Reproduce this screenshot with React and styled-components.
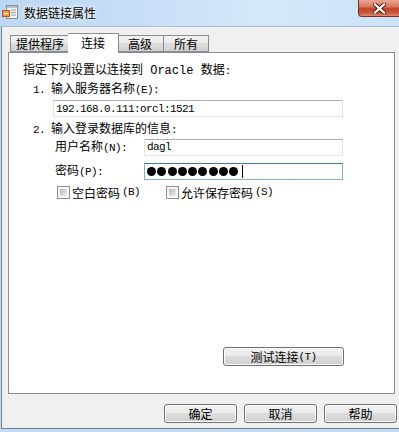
import React from 'react'
import styled, { createGlobalStyle } from 'styled-components'

const GlobalStyle = createGlobalStyle`
  html, body {
    margin: 0;
    padding: 0;
    background: #fff;
  }
  body {
    font-family: "Noto Sans CJK SC", "Liberation Sans", sans-serif;
    font-size: 12px;
    color: #000;
  }
`

const Window = styled.div`
  width: 399px;
  height: 432px;
  display: flex;
  flex-direction: column;
  background: #c6dcf2;
  overflow: hidden;
`

const TitleBar = styled.div`
  height: 26px;
  flex: none;
  display: flex;
  align-items: flex-start;
  background: linear-gradient(to right, #bcd7f3 0%, #c6def7 35%, #d5e8fb 65%, #cce2f8 100%);
`

const TitleIcon = styled.svg`
  margin: 5px 0 0 2px;
  flex: none;
`

const TitleText = styled.span`
  margin: 5px 0 0 5px;
  line-height: 15px;
  font-size: 12px;
  text-shadow: 0 0 6px #fff, 0 0 3px #fff;
`

const CloseButton = styled.div`
  margin-left: auto;
  width: 41px;
  height: 17px;
  box-sizing: border-box;
  border: 1px solid #7b2f22;
  border-top: none;
  border-right: none;
  border-radius: 0 0 0 4px;
  background: linear-gradient(#e9a896 0%, #d77a63 40%, #c34228 55%, #c9553c 80%, #dc8c73 100%);
  display: flex;
  align-items: center;
  justify-content: center;
`

const Client = styled.div`
  flex: 1;
  margin: 0 0 3px 1px;
  border-top: 1px solid #a9bdd3;
  border-left: 1px solid #6d819b;
  border-bottom: 1px solid #6d819b;
  background: #f0f0f0;
  padding: 6px 2px 5px 6px;
  display: flex;
  flex-direction: column;
`

const TabStrip = styled.div`
  height: 20px;
  flex: none;
  margin-bottom: -1px;
  padding-left: 2px;
  display: flex;
  align-items: flex-end;
  position: relative;
  z-index: 1;
`

const Tab = styled.div`
  box-sizing: border-box;
  width: ${p => p.w}px;
  height: ${p => (p.active ? 20 : 17)}px;
  margin: ${p => (p.active ? '0 -2px' : '0 0 1px 0')};
  border: 1px solid #898c95;
  border-bottom: ${p => (p.active ? 'none' : '1px solid #898c95')};
  background: ${p =>
    p.active ? '#fff' : 'linear-gradient(#f3f3f3 0%, #ebebeb 45%, #dddddd 50%, #d0d0d0 100%)'};
  display: flex;
  align-items: center;
  justify-content: center;
  padding-bottom: ${p => (p.active ? 2 : 0)}px;
  line-height: 14px;
  position: relative;
  z-index: ${p => (p.active ? 2 : 1)};
  & + & {
    border-left: ${p => (p.active ? '1px solid #898c95' : 'none')};
  }
`

const Panel = styled.div`
  height: 342px;
  box-sizing: border-box;
  margin-right: 2px;
  background: #fff;
  border: 1px solid #898c95;
  padding: 8px 0 0 14px;
  display: flex;
  flex-direction: column;
  align-items: flex-start;
`

const Line = styled.div`
  line-height: 16px;
  height: 16px;
  margin-top: ${p => p.mt || 0}px;
  margin-left: ${p => p.ml || 0}px;
  white-space: pre;
`

const Half = styled.span`
  font-family: "Liberation Mono", monospace;
  font-size: 11px;
  letter-spacing: -0.6px;
`

const Mono = styled.span`
  font-family: "Liberation Mono", monospace;
  font-size: 12px;
`

const Field = styled.div`
  box-sizing: border-box;
  width: ${p => p.w}px;
  height: 17px;
  margin-top: ${p => p.mt || 0}px;
  margin-left: ${p => p.ml || 0}px;
  border: 1px solid ${p => (p.focused ? '#7fb1de' : '#dfe3e8')};
  border-top-color: ${p => (p.focused ? '#3d7bad' : '#abadb3')};
  background: #fff;
  padding-left: 2px;
  display: flex;
  align-items: center;
  gap: 1.3px;
  font-family: "Liberation Mono", monospace;
  font-size: 11px;
  letter-spacing: -0.6px;
`

const FormRow = styled.div`
  display: grid;
  grid-template-columns: 89px 199px;
  align-items: center;
  margin-top: ${p => p.mt || 0}px;
  margin-left: 32px;
`

const Label = styled.span`
  line-height: 16px;
  white-space: nowrap;
`

const Dot = styled.span`
  width: 9px;
  height: 9px;
  border-radius: 50%;
  background: #000;
  flex: none;
`

const Caret = styled.span`
  width: 1px;
  height: 13px;
  background: #000;
  margin-left: 2px;
`

const CheckRow = styled.div`
  display: flex;
  align-items: center;
  margin: 4px 0 0 34px;
  height: 16px;
`

const CheckItem = styled.label`
  display: flex;
  align-items: center;
  gap: 2px;
  width: ${p => p.w || 'auto'};
  white-space: nowrap;
`

const CheckBox = styled.span`
  width: 13px;
  height: 13px;
  box-sizing: border-box;
  border: 1px solid #8e8f8f;
  background: #f6f6f6;
  padding: 2px;
  flex: none;
  &::after {
    content: '';
    display: block;
    width: 100%;
    height: 100%;
    background: linear-gradient(135deg, #b3b3b3 0%, #d6d6d6 50%, #efefef 100%);
  }
`

const Button = styled.button`
  width: ${p => p.w || 73}px;
  height: 19px;
  box-sizing: border-box;
  padding: 0;
  border: 1px solid #707070;
  border-radius: 3px;
  background: linear-gradient(#f2f2f2 0%, #ebebeb 45%, #dddddd 50%, #cfcfcf 100%);
  box-shadow: inset 0 0 0 1px #fbfbfb;
  font-family: "Noto Sans CJK SC", sans-serif;
  font-size: 12px;
  color: #000;
  display: flex;
  align-items: center;
  justify-content: center;
  flex: none;
`

const TestButton = styled(Button)`
  margin: auto 0 27px 200px;
`

const ButtonRow = styled.div`
  margin-top: 10px;
  display: flex;
  justify-content: flex-end;
  gap: 7px;
`

const AppIcon = () => (
  <TitleIcon width="17" height="15" viewBox="0 0 17 15">
    <rect x="4.5" y="0.5" width="11" height="13" fill="#f5f5f5" stroke="#8c8c8c" />
    <rect x="5" y="1" width="10" height="2" fill="#b9c4d0" />
    <line x1="9" y1="5" x2="14" y2="5" stroke="#9a9a9a" />
    <line x1="9" y1="7.5" x2="14" y2="7.5" stroke="#9a9a9a" />
    <line x1="9" y1="10" x2="14" y2="10" stroke="#9a9a9a" />
    <rect x="0.5" y="5.5" width="7" height="6" fill="#f39a4a" stroke="#b8561e" />
    <line x1="2" y1="8.5" x2="6" y2="8.5" stroke="#fff" />
  </TitleIcon>
)

const CloseIcon = () => (
  <svg width="13" height="11" viewBox="0 0 13 11">
    <path d="M2 1.5 L11 9.5 M11 1.5 L2 9.5" stroke="#5a241a" strokeWidth="4.2" strokeLinecap="square" />
    <path d="M2 1.5 L11 9.5 M11 1.5 L2 9.5" stroke="#fff" strokeWidth="2.2" strokeLinecap="square" />
  </svg>
)

const tabs = [
  { label: '提供程序', w: 60 },
  { label: '连接', w: 51, active: true },
  { label: '高级', w: 47 },
  { label: '所有', w: 45 },
]

export default function App() {
  return (
    <>
      <GlobalStyle />
      <Window>
        <TitleBar>
          <AppIcon />
          <TitleText>数据链接属性</TitleText>
          <CloseButton>
            <CloseIcon />
          </CloseButton>
        </TitleBar>
        <Client>
          <TabStrip>
            {tabs.map(t => (
              <Tab key={t.label} w={t.w} active={t.active}>
                {t.label}
              </Tab>
            ))}
          </TabStrip>
          <Panel>
            <Line>
              指定下列设置以连接到<Mono> Oracle </Mono>数据<Half>:</Half>
            </Line>
            <Line mt={3} ml={10}>
              <Half>1. </Half>输入服务器名称<Half>(E):</Half>
            </Line>
            <Field w={290} mt={4} ml={30}>192.168.0.111:orcl:1521</Field>
            <Line mt={3} ml={10}>
              <Half>2. </Half>输入登录数据库的信息<Half>:</Half>
            </Line>
            <FormRow mt={2}>
              <Label>
                用户名称<Half>(N):</Half>
              </Label>
              <Field w={199}>dagl</Field>
            </FormRow>
            <FormRow mt={6}>
              <Label>
                密码<Half>(P):</Half>
              </Label>
              <Field w={199} focused>
                {Array.from({ length: 9 }, (_, i) => (
                  <Dot key={i} />
                ))}
                <Caret />
              </Field>
            </FormRow>
            <CheckRow>
              <CheckItem w="109px">
                <CheckBox />
                空白密码<Half>(B)</Half>
              </CheckItem>
              <CheckItem>
                <CheckBox />
                允许保存密码<Half>(S)</Half>
              </CheckItem>
            </CheckRow>
            <TestButton w={121}>
              测试连接<Half>(T)</Half>
            </TestButton>
          </Panel>
          <ButtonRow>
            <Button>确定</Button>
            <Button>取消</Button>
            <Button>帮助</Button>
          </ButtonRow>
        </Client>
      </Window>
    </>
  )
}
